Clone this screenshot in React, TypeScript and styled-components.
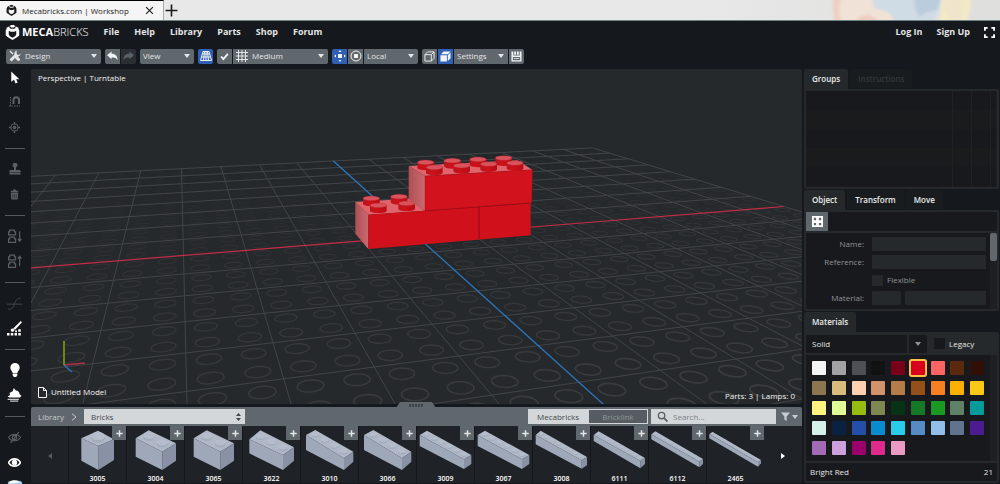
import React from "react";
import styled, { createGlobalStyle, css } from "styled-components";

const GlobalStyle = createGlobalStyle`
  *, *::before, *::after { box-sizing: border-box; }
  html, body { margin: 0; padding: 0; background: #15181c; }
  body, button, input, select {
    font-family: "Open Sans", "Noto Sans", sans-serif;
    font-size: 8px;
    line-height: 12px;
    color: #e4e6e7;
  }
  button, input, select { margin: 0; border: 0; padding: 0; border-radius: 0; background: none; outline: 0; }
  button { cursor: pointer; }
  a { color: inherit; text-decoration: none; }
  svg { display: block; }
`;

const Page = styled.div`
  display: flex;
  flex-direction: column;
  height: 100vh;
  overflow: hidden;
  background: #15181c;
`;

/* ---------- browser strip ---------- */

const TabStrip = styled.div`
  display: flex;
  flex: none;
  height: 21px;
  background: linear-gradient(90deg, #e8e8e8 0 70%, #dededd);
  border-bottom: 1px solid #6f8084;
  color: #1b1b1b;
`;

const BrowserTab = styled.div`
  display: flex;
  align-items: center;
  gap: 5px;
  width: 164px;
  padding: 0 6px;
  background: #f5f5f5;
  border-top: 1px solid #000;
  border-right: 1px solid #aaa;
`;

const TabTitle = styled.span`
  flex: 1;
  white-space: nowrap;
`;

const StripButton = styled.button`
  display: grid;
  place-items: center;
  width: 15px;
  color: #1b1b1b;
`;

const Artwork = styled.svg`
  width: 180px;
  height: 20px;
  margin-left: auto;
`;

/* ---------- navigation ---------- */

const Nav = styled.nav`
  display: flex;
  align-items: center;
  flex: none;
  height: 22px;
  padding: 0 5px;
  gap: 15px;
  font-size: 9px;
  font-weight: 700;
`;

const Brand = styled.a`
  display: flex;
  align-items: center;
  gap: 2px;
  font-size: 11px;
  color: #fff;
`;

const Light = styled.span`
  font-weight: 300;
`;

const NavEnd = styled.div`
  display: flex;
  align-items: center;
  gap: 14px;
  margin-left: auto;
`;

const IconButton = styled.button`
  display: grid;
  place-items: center;
  color: #fff;
`;

/* ---------- toolbar ---------- */

const Toolbar = styled.div`
  display: flex;
  align-items: center;
  flex: none;
  height: 26px;
  padding: 0 6px;
  gap: 4px;
`;

const Group = styled.div`
  display: flex;
  gap: 1px;
  height: 15px;
  border-radius: 2px;
  overflow: hidden;
`;

const ToolButton = styled.button<{ $tone?: "active" | "off" }>`
  display: grid;
  place-items: center;
  width: 15px;
  height: 15px;
  color: ${(p) => (p.$tone === "off" ? "#5a6065" : "#f2f3f4")};
  background: ${(p) => (p.$tone === "active" ? "#2f60b5" : p.$tone === "off" ? "#2b2f33" : "#61686d")};
`;

const SelectBox = styled.label<{ $width: number }>`
  display: flex;
  align-items: center;
  gap: 4px;
  width: ${(p) => p.$width}px;
  padding: 0 4px 0 3px;
  background: #61686d;
`;

const PlainSelect = styled.select`
  flex: 1;
  min-width: 0;
  height: 15px;
  appearance: none;
`;

/* ---------- workspace ---------- */

const Workspace = styled.div`
  display: flex;
  flex: 1;
  min-height: 0;
`;

const Rail = styled.aside`
  display: flex;
  flex-direction: column;
  align-items: center;
  flex: none;
  gap: 9px;
  width: 31px;
  padding-right: 2px;
  overflow: hidden;
`;

const RailButton = styled.button<{ $on?: boolean }>`
  display: grid;
  place-items: center;
  flex: none;
  width: 20px;
  height: 16px;
  color: ${(p) => (p.$on ? "#fff" : "#5b6165")};
`;

const RailRule = styled.hr`
  flex: none;
  width: 20px;
  height: 1px;
  margin: 4px 0 3px;
  border: 0;
  background: #565b5f;
`;

const Center = styled.main`
  display: flex;
  flex-direction: column;
  flex: 1;
  min-width: 0;
  padding-bottom: 1px;
`;

const Viewport = styled.section`
  position: relative;
  flex: 1;
  min-height: 0;
  overflow: hidden;
  background: #26292c;
  border-radius: 2px;
`;

const Scene = styled.svg`
  position: absolute;
  inset: 0;
  width: 100%;
  height: 100%;
`;

const Overlay = styled.div<{ $at: "top" | "left" | "right" }>`
  position: absolute;
  display: flex;
  align-items: center;
  gap: 4px;
  color: #f2f3f3;
  ${(p) => (p.$at === "top" ? "top: 3px;" : p.$at === "left" ? "bottom: 6px;" : "bottom: 2px;")}
  ${(p) => (p.$at === "right" ? "right: 7px;" : "left: 7px;")}
`;

/* ---------- library ---------- */

const Library = styled.section`
  position: relative;
  flex: none;
  margin-top: 3px;
`;

const Handle = styled.svg`
  position: absolute;
  left: 365px;
  top: -6px;
`;

const LibraryBar = styled.div`
  display: flex;
  align-items: center;
  height: 19px;
  padding: 0 4px 0 7px;
  color: #c3c8cb;
  background: #61686d;
  border-radius: 2px 2px 0 0;
`;

const Category = styled.label`
  display: flex;
  align-items: center;
  width: 161px;
  height: 15px;
  padding: 0 4px 0 7px;
  margin: 0 auto 0 6px;
  color: #43474a;
  background: #d3d7da;
`;

const CategorySelect = styled(PlainSelect)`
  color: #43474a;
`;

const Crumb = styled.a`
  margin-right: 6px;
`;

const Source = styled.button<{ $on?: boolean }>`
  width: 60px;
  height: 15px;
  border: 1px solid #d3d7da;
  color: ${(p) => (p.$on ? "#43474a" : "#8f969a")};
  background: ${(p) => (p.$on ? "#d3d7da" : "#565c61")};
`;

const SearchBox = styled.label`
  display: flex;
  align-items: center;
  gap: 5px;
  width: 125px;
  height: 15px;
  margin: 0 5px 0 3px;
  padding: 0 6px;
  color: #5b6165;
  background: #d3d7da;
`;

const SearchInput = styled.input`
  flex: 1;
  min-width: 0;
  color: #43474a;
  &::placeholder { color: #7d8387; opacity: 1; }
`;

const FilterButton = styled(IconButton)`
  display: flex;
  gap: 2px;
  color: #c9cdd0;
`;

const Shelf = styled.div`
  display: grid;
  grid-template-columns: 37px repeat(12, 58px) 1fr;
  height: 57px;
  background: #1f2226;
`;

const PageButton = styled.button<{ $on?: boolean }>`
  display: grid;
  place-items: center;
  color: ${(p) => (p.$on ? "#fff" : "#54595d")};
`;

const PartCard = styled.article`
  position: relative;
  border-left: 1px solid #15171a;
`;

const PartImage = styled.svg`
  width: 58px;
  height: 46px;
`;

const PartNumber = styled.div`
  font-size: 7px;
  font-weight: 600;
  line-height: 13px;
  text-align: center;
  color: #fff;
`;

const AddButton = styled.button`
  position: absolute;
  top: 0;
  right: 0;
  display: grid;
  place-items: center;
  width: 14px;
  height: 14px;
  color: #e3e5e6;
  background: #61686d;
`;

/* ---------- side panels ---------- */

const Side = styled.aside`
  display: flex;
  flex-direction: column;
  flex: none;
  width: 198px;
  padding: 0 1px 1px 2px;
  gap: 1px;
`;

const Tabs = styled.div`
  display: flex;
  gap: 2px;
  height: 20px;
`;

const PanelTab = styled.button<{ $state?: "active" | "off" }>`
  height: ${(p) => (p.$state === "active" ? "20px" : "19px")};
  padding: ${(p) => (p.$state === "active" ? "0 8px 1px" : "0 8px")};
  border-radius: 2px 2px 0 0;
  font-weight: 600;
  color: ${(p) => (p.$state === "off" ? "#33373a" : "#eceded")};
  background: ${(p) => (p.$state === "active" ? "#25292b" : "#191c1f")};
`;

const Panel = styled.section<{ $height?: number; $grow?: boolean }>`
  display: flex;
  flex-direction: column;
  gap: 2px;
  padding: 2px;
  background: #25292b;
  border-radius: 0 2px 2px 2px;
  ${(p) => (p.$grow ? css`flex: 1; min-height: 0;` : css`height: ${p.$height}px;`)}
`;

const Well = styled.div`
  display: flex;
  flex: 1;
  min-height: 0;
  background: #18191c;
`;

const GroupsGrid = styled.div`
  display: grid;
  grid-template-columns: 1fr 19px 19px 6px;
  grid-auto-rows: 19px;
  flex: 1;
  overflow: hidden;
`;

const GroupsCell = styled.div<{ $alt: boolean }>`
  background: ${(p) => (p.$alt ? "#1a1b1c" : "#18191c")};
  border-right: 1px solid #1f2123;
`;

const ObjectBar = styled.div`
  display: flex;
  height: 19px;
  background: #18191c;
`;

const ObjectButton = styled.button`
  display: grid;
  place-items: center;
  width: 22px;
  color: #fff;
  background: #61686d;
`;

const Form = styled.form`
  display: grid;
  grid-template-columns: 58px 1fr;
  grid-auto-rows: 14px;
  flex: 1;
  gap: 4px 8px;
  padding: 4px 4px 0 0;
  align-items: center;
  overflow: hidden;
  color: #8e9295;
`;

const FieldLabel = styled.label`
  text-align: right;
`;

const Field = styled.input`
  width: 100%;
  min-width: 0;
  height: 14px;
  border-radius: 1px;
  background: #25292b;
`;

const Pair = styled.div`
  display: grid;
  grid-template-columns: 29px 1fr;
  gap: 4px;
`;

const CheckRow = styled.label`
  display: flex;
  align-items: center;
  gap: 4px;
`;

const Checkbox = styled.input<{ $dark?: boolean }>`
  appearance: none;
  width: 11px;
  height: 11px;
  border-radius: 1px;
  background: ${(p) => (p.$dark ? "#18191c" : "#25292b")};
`;

const Scrollbar = styled.div`
  width: 7px;
  background: #1d1f21;
`;

const Thumb = styled.div`
  height: 28px;
  border-radius: 2px;
  background: #61686d;
`;

const MaterialsBox = styled.div`
  display: flex;
  flex-direction: column;
  flex: 1;
  min-height: 0;
`;

const Filters = styled.div`
  display: flex;
  align-items: center;
  gap: 7px;
  height: 19px;
`;

const Finish = styled.label`
  display: flex;
  align-items: stretch;
  gap: 2px;
  width: 121px;
  height: 18px;
`;

const FinishSelect = styled(PlainSelect)`
  height: 18px;
  padding-left: 6px;
  background: #18191c;
`;

const Caret = styled.span`
  display: grid;
  place-items: center;
  width: 18px;
  color: #8f9497;
  background: #18191c;
`;

const Swatches = styled.div`
  display: grid;
  grid-template-columns: repeat(9, 14px);
  grid-auto-rows: 14px;
  justify-content: space-between;
  row-gap: 6px;
  flex: 1;
  padding: 6px 6px 0;
`;

const Swatch = styled.button<{ $color: string; $on?: boolean }>`
  border-radius: 1px;
  background: ${(p) => p.$color};
  ${(p) => p.$on && css`box-shadow: 0 0 0 2px #fbc044;`}
`;

const Footer = styled.div`
  display: flex;
  justify-content: space-between;
  align-items: center;
  height: 18px;
  padding: 0 4px;
  background: #18191c;
`;

/* ---------- icons ---------- */

type IconProps = { size?: number; children: React.ReactNode };

const Line = ({ size = 12, children }: IconProps) => (
  <svg width={size} height={size} viewBox="0 0 24 24" fill="none" stroke="currentColor" strokeWidth="2" aria-hidden="true">
    {children}
  </svg>
);

const Fill = ({ size = 12, children }: IconProps) => (
  <svg width={size} height={size} viewBox="0 0 24 24" fill="currentColor" aria-hidden="true">
    {children}
  </svg>
);

const Down = () => (
  <svg width="6" height="4" viewBox="0 0 6 4" fill="currentColor" aria-hidden="true">
    <path d="M0 0h6L3 4z" />
  </svg>
);

const BrandMark = ({ size }: { size: number }) => (
  <svg width={size} height={size} viewBox="0 0 36 40" fill="currentColor" aria-hidden="true">
    <path
      fillRule="evenodd"
      d="M10 3v5c3 3 13 3 16 0V3l8 4v4l2 2v15l-5 4-13 8-13-8-5-4V13l2-2V7zM8 15v10l3 5 7 4 7-4 3-5V15l-5 3H13z"
    />
    <path d="M12 1c2-1 10-1 12 0v4c-3 2-9 2-12 0z" />
  </svg>
);

const ToolsIcon = () => (
  <Fill>
    <path d="M3 1l6 6-2 2-6-6zM11 10l2-2 9 10c1 2-2 5-4 4L9 13z" />
    <path d="M16 1a6 6 0 0 0-5 8L1 19l4 4 10-10a6 6 0 0 0 8-6l-3 3-4-1-1-4z" />
  </Fill>
);

const GridIcon = () => (
  <Line>
    <path d="M5 0v24M12 0v24M19 0v24M0 5h24M0 12h24M0 19h24" />
  </Line>
);

const FloorIcon = () => (
  <Line>
    <path d="M6 3h12l5 18H1zM12 3v18M9 3L7 21M15 3l2 18M5 8h14M3 14h18" />
  </Line>
);

const PivotIcon = () => (
  <Fill>
    <path d="M8 8h8v8H8zM12 0l3 4H9zM12 24l3-4H9zM0 12l4-3v6zM24 12l-4-3v6z" />
  </Fill>
);

const TargetIcon = () => (
  <Line>
    <circle cx="12" cy="12" r="10" />
    <path d="M8 8h8v8H8z" fill="currentColor" stroke="none" />
  </Line>
);

const CubeIcon = () => (
  <Line size={11}>
    <path d="M2 8h14v14H2zM2 8l6-6h14v14l-6 6M16 8l6-6" />
  </Line>
);

const SolidCubeIcon = () => (
  <Fill size={11}>
    <path d="M1 9h14v14H1zM2 7l6-6h15l-6 6zM17 9l6-6v13l-6 6z" />
  </Fill>
);

const SaveIcon = () => (
  <Fill size={11}>
    <path fillRule="evenodd" d="M1 1h4v9h14V1h4v22H1zM4 13v7h16v-7zM7 1h4v7H7zM13 1h4v7h-4zM6 15h12v2H6z" />
  </Fill>
);

const railIcons: { label: string; on?: boolean; icon: React.ReactNode; rule?: boolean }[] = [
  { label: "Select", on: true, icon: <Fill size={13}><path d="M6 1v19l5-4 3 7 4-2-3-6h6z" /></Fill> },
  {
    label: "Snap",
    icon: (
      <Line size={12}>
        <path d="M3 2v20M0 20h22" strokeDasharray="3 2" />
        <path d="M9 16V8a5 5 0 0 1 11 0v8" strokeWidth="4" />
      </Line>
    ),
  },
  {
    label: "Origin",
    rule: true,
    icon: (
      <Line size={11}>
        <circle cx="12" cy="12" r="8" />
        <circle cx="12" cy="12" r="3" fill="currentColor" />
        <path d="M12 0v5M12 19v5M0 12h5M19 12h5" strokeWidth="3" />
      </Line>
    ),
  },
  { label: "Stamp", icon: <Fill size={12}><path d="M10 9a5 5 0 1 1 4 0v5h8l2 4H0l2-4h8zM1 19h22v4H1z" /></Fill> },
  {
    label: "Delete",
    rule: true,
    icon: <Fill size={11}><path fillRule="evenodd" d="M9 1h6v3h5v3H4V4h5zM4 8h16l-1 15H5zM8 11v9h1v-9zM12 11v9h1v-9zM15 11v9h1v-9z" /></Fill>,
  },
  {
    label: "Move down",
    icon: (
      <Line size={14}>
        <path d="M1 10V5h2V2h8v3h2v5zM1 23v-6h2v-3h8v3h2v6zM20 4v15M17 17l3 4 3-4" />
      </Line>
    ),
  },
  {
    label: "Move up",
    rule: true,
    icon: (
      <Line size={14}>
        <path d="M1 10V5h2V2h8v3h2v5zM1 23v-6h2v-3h8v3h2v6zM20 21V6M17 8l3-4 3 4" />
      </Line>
    ),
  },
  {
    label: "Curve",
    icon: (
      <Line size={15}>
        <path d="M0 13h24M2 21c7 1 8-4 10-9s4-8 10-9" strokeWidth="1" />
      </Line>
    ),
  },
  {
    label: "Paint",
    rule: true,
    on: true,
    icon: <Fill size={15}><path d="M22 0l2 2-11 12-3-2zM6 15c0-3 3-4 5-2s0 5-4 4zM0 19h4v4H0zM6 19h4v4H6zM12 19h4v4h-4zM18 19h4v4h-4zM18 13h4v4h-4zM13 15h3v3h-3z" /></Fill>,
  },
  {
    label: "Lamp",
    on: true,
    icon: <Fill size={14}><path d="M12 0a8 8 0 0 1 8 8c0 4-3 5-4 9H8c-1-4-4-5-4-9a8 8 0 0 1 8-8zM8 18h8v3l-2 3h-4l-2-3z" /></Fill>,
  },
  {
    label: "Render",
    rule: true,
    on: true,
    icon: (
      <Fill size={15}>
        <path d="M11 0l3 4c4 0 6 3 6 6l3 2-2 3H4l-3-2 4-2-1-3 5-3z" />
        <path d="M1 17h18v2H1zM5 20h13v2H5z" opacity=".75" />
      </Fill>
    ),
  },
  {
    label: "Hide",
    icon: (
      <Line size={13}>
        <path d="M1 12c5-8 17-8 22 0-5 8-17 8-22 0zM20 2L5 22" />
        <circle cx="12" cy="12" r="4" />
      </Line>
    ),
  },
  {
    label: "Show",
    on: true,
    icon: (
      <Line size={13}>
        <path d="M1 12c5-9 17-9 22 0-5 9-17 9-22 0z" strokeWidth="3" />
        <circle cx="12" cy="12" r="4" fill="currentColor" />
      </Line>
    ),
  },
  {
    label: "Layers",
    on: true,
    icon: <Fill size={16}><path d="M2 4c6-3 14-3 20 0l2 8H0z" fill="#a9cdea" /><path d="M4 4c5-3 11-2 15 1L4 7z" /></Fill>,
  },
];

/* ---------- 3D scene ---------- */

const GRID = 8;
const ORIGIN = [417, 236.4];
const VANISH_X = [2986, 26.8];
const VANISH_Z = [178, 21];
const STEP_X = 0.02083;
const STEP_Z = -0.0673;

const depth = (i: number, j: number) => 1 + i * STEP_X + j * STEP_Z;

function project(i: number, j: number) {
  const w = depth(i, j);
  const at = (k: number) => (ORIGIN[k] + i * STEP_X * VANISH_X[k] + j * STEP_Z * VANISH_Z[k]) / w;
  return `${at(0).toFixed(1)} ${at(1).toFixed(1)}`;
}

const steps = Array.from({ length: 2 * GRID + 1 }, (_, n) => n - GRID);
const studSteps = Array.from({ length: 4 * GRID }, (_, n) => -GRID + 0.25 + n / 2);

const gridPath = steps
  .filter((n) => n !== 0)
  .map((n) => `M${project(n, -GRID)}L${project(n, GRID)}M${project(-GRID, n)}L${project(GRID, n)}`)
  .join("");

function ring(i: number, j: number) {
  const points = Array.from({ length: 24 }, (_, n) => {
    const t = (n / 24) * Math.PI * 2;
    return project(i + 0.14 * Math.cos(t), j + 0.14 * Math.sin(t));
  });
  return `M${points.join("L")}Z`;
}

const ringRows = studSteps.map((j) => ({
  d: studSteps.map((i) => ring(i, j)).join(""),
  width: Math.min(2, 1 / depth(0, j)),
  opacity: Math.max(0.08, Math.min(1, 1.3 - depth(0, j) * 0.85)),
}));

const backStuds = [[317, 97], [397, 92], [474, 88], [551, 84]];
const frontStuds = [[343, 112], [425, 107], [506, 102], [585, 99]];
const lowStuds = [[154, 205], [237, 200], [175, 226], [260, 220]];

const SceneStud = ({ at: [x, y] }: { at: number[] }) => (
  <g>
    <path d={`M${x - 25} ${y}v16a25 8 0 0 0 50 0v-16z`} fill="url(#stud)" />
    <ellipse cx={x} cy={y} rx="25" ry="7" fill="#d9535c" stroke="#b51c25" strokeWidth="1" />
  </g>
);

const SceneView = () => (
  <Scene viewBox="31 69 771 335" preserveAspectRatio="xMidYMid slice" role="img" aria-label="Three red bricks on the grid">
    <defs>
      <linearGradient id="stud" x1="0" x2="1">
        <stop offset="0" stopColor="#b8161e" />
        <stop offset=".4" stopColor="#cf1019" />
        <stop offset="1" stopColor="#b50d15" />
      </linearGradient>
      <linearGradient id="side" x1="0" x2="1">
        <stop offset="0" stopColor="#ad5056" />
        <stop offset="1" stopColor="#c96a70" />
      </linearGradient>
    </defs>
    {ringRows.map((row, n) => (
      <path key={n} d={row.d} fill="none" stroke="#3e3f40" strokeWidth={row.width} opacity={row.opacity} />
    ))}
    <path d={gridPath} fill="none" stroke="#424547" strokeWidth="1" />
    <path d={`M${project(-GRID, 0)}L${project(GRID, 0)}`} stroke="#c42e48" strokeWidth="1.2" />
    <path d={`M${project(0, -GRID)}L${project(0, GRID)}`} stroke="#2d79bf" strokeWidth="1.2" />
    <g transform="translate(320 130) scale(.33333)">
      <path d="M106 216L267 206l48 36-170 12z" fill="#e1646c" />
      <path d="M106 216l39 38v103l-39-46z" fill="url(#side)" />
      <path d="M145 254l487-35v97l-487 41z" fill="#d0111b" />
      <path d="M477 230v97M315 242L632 219" stroke="#8c0c14" strokeWidth="3" fill="none" />
      {lowStuds.map((s) => <SceneStud key={s.join()} at={s} />)}
      <path d="M266 108L592 91l45 28-322 19z" fill="#e1646c" />
      <path d="M266 108l49 30v104l-49-35z" fill="url(#side)" />
      <path d="M315 138l322-19-2 99-320 24z" fill="#d2121c" stroke="#a60f17" strokeWidth="1" />
      {[...backStuds, ...frontStuds].map((s) => <SceneStud key={s.join()} at={s} />)}
    </g>
    <g fill="none" strokeWidth="1.6">
      <path d="M64 365l21-2" stroke="#b4304a" />
      <path d="M64 365l8 7" stroke="#2d6fb0" />
      <path d="M64 365v-24" stroke="#7d9f14" />
    </g>
  </Scene>
);

/* ---------- part previews ---------- */

type Shape = { left: number[]; top: number[]; right: number[]; mid: number[]; drop: number[] };

const shapes: Record<string, Shape> = {
  one: { left: [37, 37], top: [87, 14], right: [135, 40], mid: [88, 60], drop: [67, 72, 62] },
  two: { left: [26, 37], top: [65, 13], right: [147, 52], mid: [106, 77], drop: [55, 55, 52] },
  three: { left: [19, 40], top: [52, 13], right: [153, 64], mid: [120, 87], drop: [42, 45, 40] },
  four: { left: [15, 27], top: [43, 12], right: [157, 77], mid: [129, 97], drop: [45, 35, 30] },
  six: { left: [8, 27], top: [30, 14], right: [163, 87], mid: [141, 100], drop: [33, 29, 27] },
  eight: { left: [8, 27], top: [23, 14], right: [162, 93], mid: [146, 103], drop: [28, 25, 25] },
  ten: { left: [8, 27], top: [23, 16], right: [162, 96], mid: [148, 105], drop: [18, 22, 18] },
  twelve: { left: [7, 25], top: [19, 16], right: [162, 99], mid: [151, 107], drop: [15, 17, 15] },
  sixteen: { left: [7, 24], top: [17, 18], right: [162, 102], mid: [153, 109], drop: [13, 13, 10] },
};

const parts: { id: string; shape: string; studs: number }[] = [
  { id: "3005", shape: "one", studs: 1 },
  { id: "3004", shape: "two", studs: 2 },
  { id: "3065", shape: "two", studs: 2 },
  { id: "3622", shape: "three", studs: 3 },
  { id: "3010", shape: "four", studs: 4 },
  { id: "3066", shape: "four", studs: 4 },
  { id: "3009", shape: "six", studs: 6 },
  { id: "3067", shape: "six", studs: 6 },
  { id: "3008", shape: "eight", studs: 8 },
  { id: "6111", shape: "ten", studs: 10 },
  { id: "6112", shape: "twelve", studs: 12 },
  { id: "2465", shape: "sixteen", studs: 16 },
];

const PartPreview = ({ shape, studs }: { shape: Shape; studs: number }) => {
  const { left, top, right, mid, drop } = shape;
  const start = [(left[0] + top[0]) / 2, (left[1] + top[1]) / 2];
  const end = [(right[0] + mid[0]) / 2, (right[1] + mid[1]) / 2];
  const radius = Math.max(3, (top[0] - left[0]) * 0.42);
  const rise = radius * 0.35;
  return (
    <PartImage viewBox="0 0 174 138" aria-hidden="true">
      <path d={`M${left}L${top}L${right}L${mid}Z`} fill="#b0b8c7" />
      <path d={`M${mid}L${right}v${drop[2]}L${mid[0]} ${mid[1] + drop[1]}Z`} fill="#8992a4" />
      <path d={`M${left}L${mid}v${drop[1]}L${left[0]} ${left[1] + drop[0]}Z`} fill="#9fa8b9" />
      {Array.from({ length: studs }, (_, n) => {
        const t = (n + 0.5) / studs;
        const x = start[0] + (end[0] - start[0]) * t;
        const y = start[1] + (end[1] - start[1]) * t;
        return (
          <g key={n}>
            <path
              d={`M${x - radius} ${y - rise}v${rise}a${radius} ${radius * 0.6} 0 0 0 ${radius * 2} 0v${-rise}z`}
              fill="#a3acbd"
            />
            <ellipse cx={x} cy={y - rise} rx={radius} ry={radius * 0.58} fill="#b5bdcc" />
          </g>
        );
      })}
    </PartImage>
  );
};

const colors = [
  "#f4f4f4", "#a2a2a3", "#4c5055", "#111213", "#780019", "#d9001f", "#ff6363", "#5b2a0d", "#300f06",
  "#8c7650", "#d7bc7d", "#fdd0b0", "#d2936b", "#b37c49", "#945019", "#f68022", "#feb000", "#fac915",
  "#fff481", "#e1fb95", "#97bc10", "#808750", "#063315", "#147a25", "#199a22", "#5f8266", "#049b9b",
  "#d6f1ea", "#0a2242", "#234fa6", "#078ccf", "#29cde9", "#568bc4", "#91bfe9", "#62738e", "#4a1c8f",
  "#a26bb7", "#cd9fdd", "#99006b", "#dc2b8c", "#eb9bc3",
];

type DropProps = { label: string; value: string; width: number; icon?: React.ReactNode };

const Dropdown = ({ label, value, width, icon }: DropProps) => (
  <SelectBox $width={width}>
    {icon}
    <PlainSelect aria-label={label}>
      <option>{value}</option>
    </PlainSelect>
    <Down />
  </SelectBox>
);

const Materials = () => (
  <MaterialsBox>
    <Tabs>
      <PanelTab $state="active">Materials</PanelTab>
    </Tabs>
    <Panel $grow>
      <Filters>
        <Finish>
          <FinishSelect aria-label="Finish"><option>Solid</option></FinishSelect>
          <Caret><Down /></Caret>
        </Finish>
        <CheckRow><Checkbox type="checkbox" $dark />Legacy</CheckRow>
      </Filters>
      <Well>
        <Swatches>
          {colors.map((color, n) => (
            <Swatch key={color} $color={color} $on={n === 5} aria-label={`Colour ${n + 1}`} />
          ))}
        </Swatches>
        <Scrollbar />
      </Well>
      <Footer>
        <span>Bright Red</span>
        <span>21</span>
      </Footer>
    </Panel>
  </MaterialsBox>
);

export default function App() {
  return (
    <Page>
      <GlobalStyle />
      <TabStrip>
        <BrowserTab>
          <BrandMark size={11} />
          <TabTitle>Mecabricks.com | Workshop</TabTitle>
          <StripButton aria-label="Close tab">
            <Line size={9}><path d="M3 3l18 18M21 3L3 21" strokeWidth="3" /></Line>
          </StripButton>
        </BrowserTab>
        <StripButton aria-label="New tab">
          <Line size={13}><path d="M12 1v22M1 12h22" strokeWidth="3" /></Line>
        </StripButton>
        <Artwork viewBox="0 0 180 20" preserveAspectRatio="none" aria-hidden="true">
          <defs>
            <filter id="soft" x="-10%" width="120%"><feGaussianBlur stdDeviation="1.5 1" /></filter>
          </defs>
          <g filter="url(#soft)" opacity=".85">
            <path d="M14-4h40l16 7 10 21H16q-5-14-2-28z" fill="#f3e2d4" />
            <path d="M14-4h8q-6 14 0 28h-6q-5-14-2-28zM34 24q4-10 16-9l14 9z" fill="#f1cbbd" />
            <path d="M52-4h72l-4 12-8 16H78l-10-12-14-4z" fill="#cddbe6" />
            <path d="M94-4h28l-5 14-10 2-8 5-4-8z" fill="#b5c9dc" />
            <path d="M122-4h26q4 14-4 28h-20q-6-14-2-28z" fill="#f4e6c8" />
            <path d="M122 0q2 12 10 24h-12zM142-4q4 14-2 28h6q6-14 4-28z" fill="#f6ecc0" />
          </g>
        </Artwork>
      </TabStrip>

      <Nav>
        <Brand href="#">
          <BrandMark size={15} />
          <span>MECA<Light>BRICKS</Light></span>
        </Brand>
        <a href="#file">File</a>
        <a href="#help">Help</a>
        <a href="#library">Library</a>
        <a href="#parts">Parts</a>
        <a href="#shop">Shop</a>
        <a href="#forum">Forum</a>
        <NavEnd>
          <a href="#login">Log In</a>
          <a href="#signup">Sign Up</a>
          <IconButton aria-label="Full screen">
            <Line size={11}><path d="M2 8V2h6M16 2h6v6M22 16v6h-6M8 22H2v-6" strokeWidth="4" /></Line>
          </IconButton>
        </NavEnd>
      </Nav>

      <Toolbar>
        <Group><Dropdown label="Mode" value="Design" width={95} icon={<ToolsIcon />} /></Group>
        <Group>
          <ToolButton aria-label="Undo"><Fill size={11}><path d="M0 9l10-8v5c9 0 13 5 13 14-3-5-6-6-13-6v4z" /></Fill></ToolButton>
          <ToolButton aria-label="Redo" $tone="off"><Fill size={11}><path d="M24 9L14 1v5C5 6 1 11 1 20c3-5 6-6 13-6v4z" /></Fill></ToolButton>
        </Group>
        <Group><Dropdown label="View" value="View" width={54} /></Group>
        <Group><ToolButton aria-label="Show floor" $tone="active"><FloorIcon /></ToolButton></Group>
        <Group>
          <ToolButton aria-label="Snap to grid"><Line size={9}><path d="M3 12l6 7L21 5" strokeWidth="5" /></Line></ToolButton>
          <Dropdown label="Grid size" value="Medium" width={95} icon={<GridIcon />} />
        </Group>
        <Group>
          <ToolButton aria-label="Pivot" $tone="active"><PivotIcon /></ToolButton>
          <ToolButton aria-label="Center"><TargetIcon /></ToolButton>
          <Dropdown label="Orientation" value="Local" width={54} />
        </Group>
        <Group>
          <ToolButton aria-label="Wireframe"><CubeIcon /></ToolButton>
          <ToolButton aria-label="Solid" $tone="active"><SolidCubeIcon /></ToolButton>
          <Dropdown label="Settings" value="Settings" width={54} />
          <ToolButton aria-label="Save"><SaveIcon /></ToolButton>
        </Group>
      </Toolbar>

      <Workspace>
        <Rail>
          {railIcons.map((item) => (
            <React.Fragment key={item.label}>
              <RailButton aria-label={item.label} $on={item.on}>{item.icon}</RailButton>
              {item.rule && <RailRule />}
            </React.Fragment>
          ))}
        </Rail>

        <Center>
          <Viewport>
            <SceneView />
            <Overlay $at="top">Perspective | Turntable</Overlay>
            <Overlay $at="left">
              <svg width="9" height="11" viewBox="0 0 9 11" fill="none" stroke="currentColor" aria-hidden="true">
                <path d="M.5.5h5l3 3v7h-8zM5.5.5v3h3" />
              </svg>
              Untitled Model
            </Overlay>
            <Overlay $at="right">Parts: 3 | Lamps: 0</Overlay>
          </Viewport>

          <Library>
            <Handle width="40" height="7" viewBox="0 0 40 7" aria-hidden="true">
              <path d="M0 7l4-6h32l4 6z" fill="#61686d" />
              <path d="M14 3v3M17 3v3M20 3v3M23 3v3M26 3v3" stroke="#34393c" strokeWidth="1.5" />
            </Handle>
            <LibraryBar>
              <Crumb href="#library">Library</Crumb>
              <Line size={8}><path d="M6 2l12 10L6 22" strokeWidth="3" /></Line>
              <Category>
                <CategorySelect aria-label="Category"><option>Bricks</option></CategorySelect>
                <svg width="5" height="8" viewBox="0 0 5 8" fill="#43474a" aria-hidden="true">
                  <path d="M0 3h5L2.5 0zM0 5h5L2.5 8z" />
                </svg>
              </Category>
              <Source $on>Mecabricks</Source>
              <Source>Bricklink</Source>
              <SearchBox>
                <Line size={11}><circle cx="10" cy="10" r="7" strokeWidth="3" /><path d="M15 15l8 8" strokeWidth="4" /></Line>
                <SearchInput type="search" aria-label="Search parts" placeholder="Search..." />
              </SearchBox>
              <FilterButton aria-label="Filter">
                <Fill size={9}><path d="M0 1h24l-9 11v12l-6-4v-8z" /></Fill>
                <Down />
              </FilterButton>
            </LibraryBar>
            <Shelf>
              <PageButton aria-label="Previous parts">
                <svg width="4" height="6" viewBox="0 0 4 6" fill="currentColor"><path d="M4 0v6L0 3z" /></svg>
              </PageButton>
              {parts.map((part) => (
                <PartCard key={part.id}>
                  <PartPreview shape={shapes[part.shape]} studs={part.studs} />
                  <PartNumber>{part.id}</PartNumber>
                  <AddButton aria-label={`Add ${part.id}`}>
                    <Line size={7}><path d="M12 1v22M1 12h22" strokeWidth="5" /></Line>
                  </AddButton>
                </PartCard>
              ))}
              <PageButton aria-label="Next parts" $on>
                <svg width="4" height="6" viewBox="0 0 4 6" fill="currentColor"><path d="M0 0v6l4-3z" /></svg>
              </PageButton>
            </Shelf>
          </Library>
        </Center>

        <Side>
          <div>
            <Tabs>
              <PanelTab $state="active">Groups</PanelTab>
              <PanelTab $state="off">Instructions</PanelTab>
            </Tabs>
            <Panel $height={100}>
              <Well>
                <GroupsGrid>
                  {Array.from({ length: 24 }, (_, n) => (
                    <GroupsCell key={n} $alt={Math.floor(n / 4) % 2 === 1} />
                  ))}
                </GroupsGrid>
              </Well>
            </Panel>
          </div>
          <div>
            <Tabs>
              <PanelTab $state="active">Object</PanelTab>
              <PanelTab>Transform</PanelTab>
              <PanelTab>Move</PanelTab>
            </Tabs>
            <Panel $height={101}>
              <ObjectBar>
                <ObjectButton aria-label="Brick properties">
                  <Fill size={11}>
                    <path fillRule="evenodd" d="M0 0h24v24H0zM4 4v5h5V4zM15 4v5h5V4zM4 15v5h5v-5zM15 15v5h5v-5z" />
                  </Fill>
                </ObjectButton>
              </ObjectBar>
              <Well>
                <Form>
                  <FieldLabel htmlFor="name">Name:</FieldLabel>
                  <Field id="name" />
                  <FieldLabel htmlFor="reference">Reference:</FieldLabel>
                  <Field id="reference" />
                  <span />
                  <CheckRow><Checkbox type="checkbox" />Flexible</CheckRow>
                  <FieldLabel htmlFor="material">Material:</FieldLabel>
                  <Pair>
                    <Field id="material" />
                    <Field aria-label="Material name" />
                  </Pair>
                </Form>
                <Scrollbar><Thumb /></Scrollbar>
              </Well>
            </Panel>
          </div>
          <Materials />
        </Side>
      </Workspace>
    </Page>
  );
}
